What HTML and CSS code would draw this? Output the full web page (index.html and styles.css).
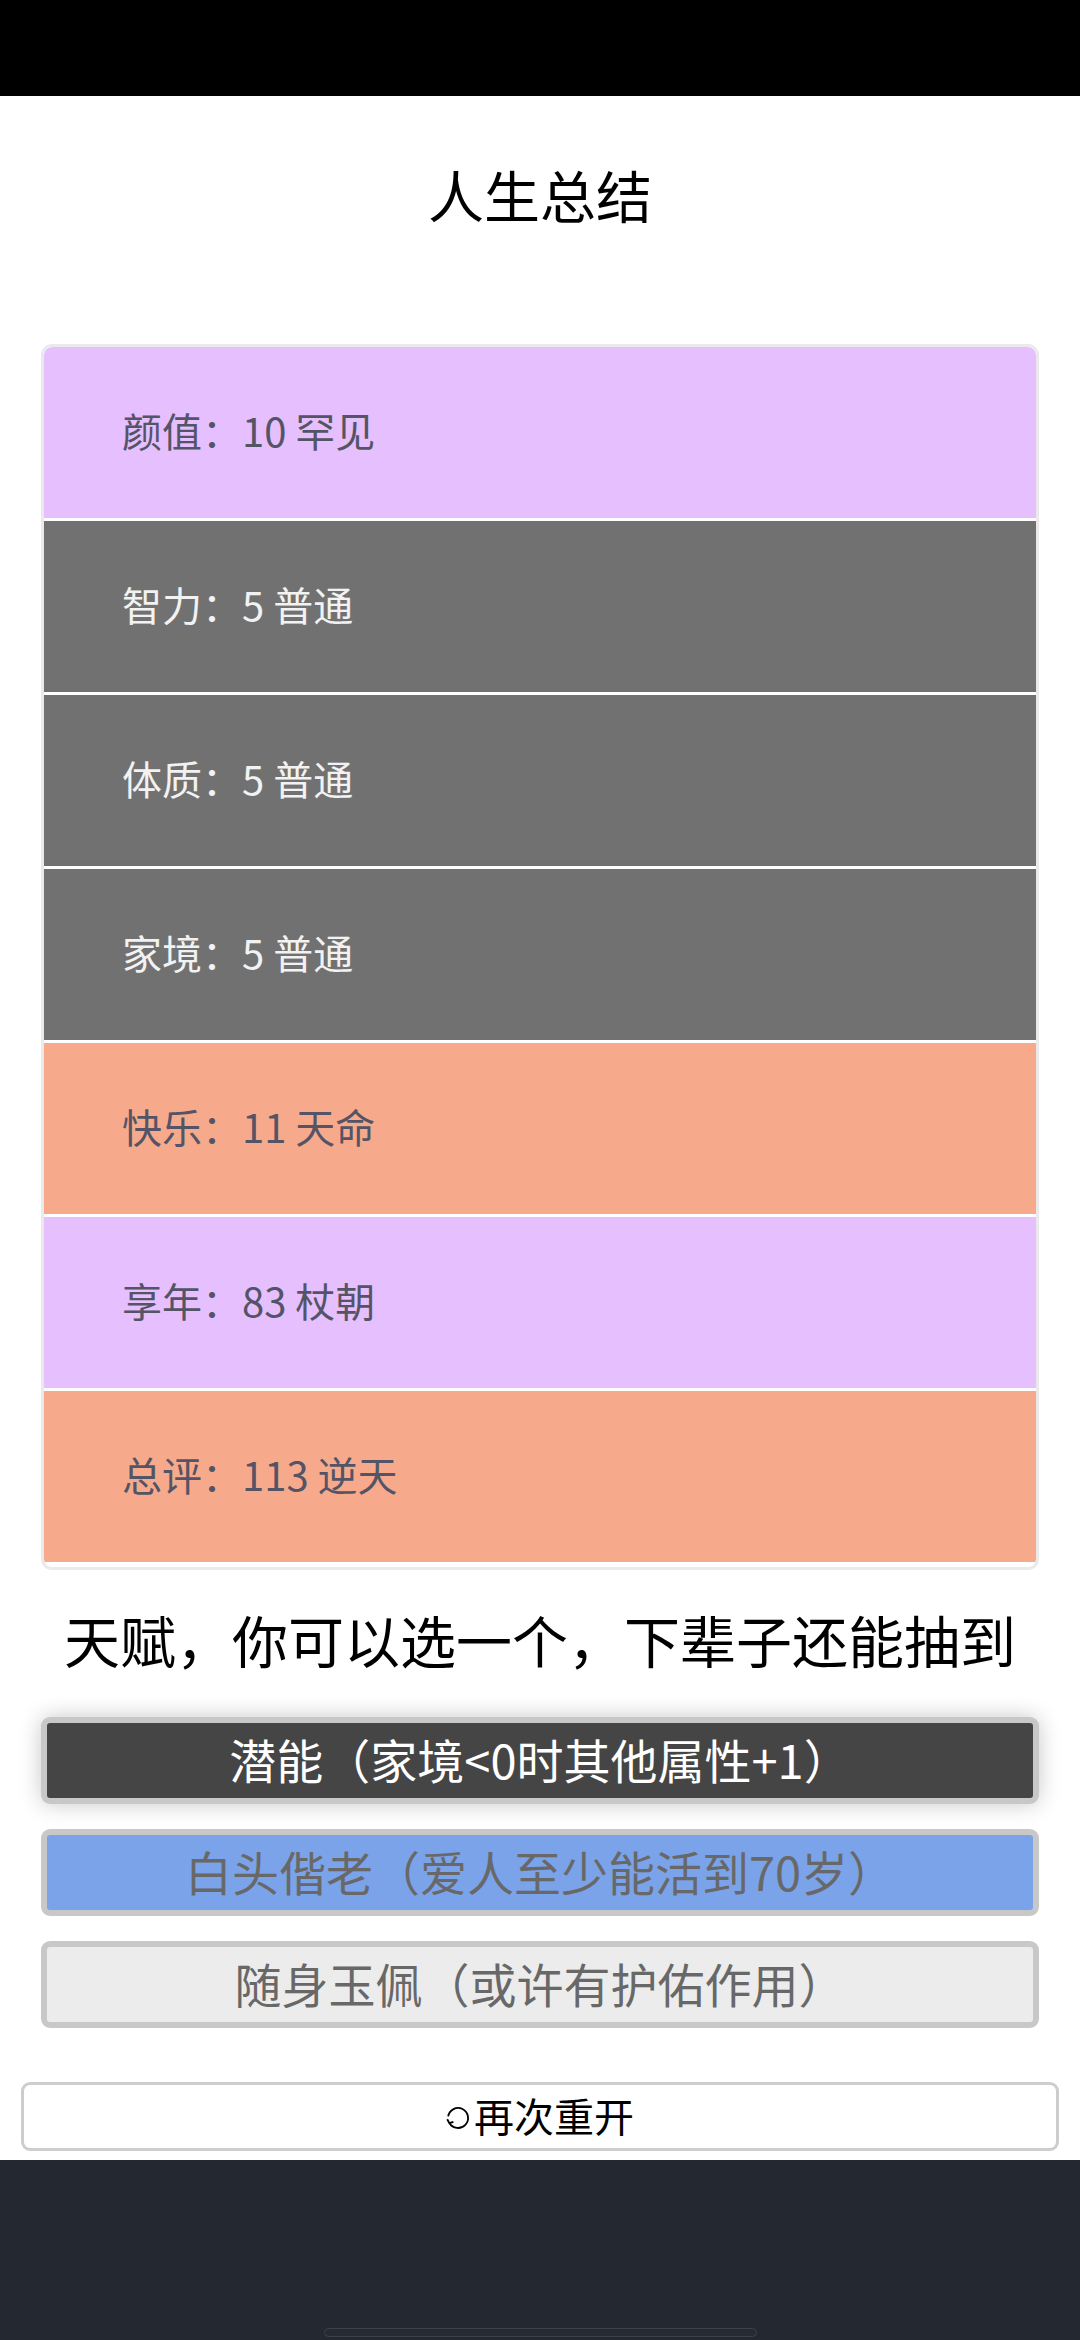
FILE: index.html
```html
<!DOCTYPE html>
<html lang="zh-CN">
<head>
    <meta charset="UTF-8">
    <meta name="viewport" content="width=device-width, initial-scale=1.0">
    <title>人生重开模拟器</title>
    <link rel="stylesheet" href="styles.css">
</head>
<body>
    <div class="statusbar"></div>

    <main class="page">
        <h1 class="title">人生总结</h1>

        <!-- Summary of properties -->
        <ul class="summary">
            <li class="grade2">颜值：10 罕见</li>
            <li class="grade0">智力：5 普通</li>
            <li class="grade0">体质：5 普通</li>
            <li class="grade0">家境：5 普通</li>
            <li class="grade3">快乐：11 天命</li>
            <li class="grade2">享年：83 杖朝</li>
            <li class="grade3">总评：113 逆天</li>
        </ul>

        <div class="subtitle">天赋，你可以选一个，下辈子还能抽到</div>

        <!-- Talents to keep -->
        <ul class="talents">
            <li class="talent selected">潜能（家境&lt;0时其他属性+1）</li>
            <li class="talent blue">白头偕老（爱人至少能活到70岁）</li>
            <li class="talent plain">随身玉佩（或许有护佑作用）</li>
        </ul>

        <button class="restart">
            <svg class="restart-icon" viewBox="0 0 24 26" width="24" height="26">
                <path d="M2.2 11.3 A10 10 0 1 1 3.4 18" fill="none" stroke="#000" stroke-width="1.8"/>
                <polyline points="1.2,14.2 3.4,18.2 7.4,16.8" fill="none" stroke="#000" stroke-width="1.8"/>
            </svg>再次重开
        </button>
    </main>

    <footer class="footer">
        <div class="home-indicator"></div>
    </footer>
</body>
</html>
```

FILE: styles.css
```css
/* Reset and base styles */
* {
    margin: 0;
    padding: 0;
    box-sizing: border-box;
}

body {
    font-family: "Noto Sans CJK SC", "Noto Sans", sans-serif;
    background-color: #fff;
    width: 1080px;
    min-height: 2340px;
    display: flex;
    flex-direction: column;
}

ul {
    list-style: none;
}

.statusbar {
    height: 96px;
    background-color: #000;
}

/* Main column */
.page {
    flex: 1;
    display: flex;
    flex-direction: column;
}

.title {
    margin-top: 57px;
    font-size: 56px;
    line-height: 82px;
    font-weight: normal;
    text-align: center;
    color: #000;
}

/* Property summary card */
.summary {
    margin: 109px 41px 0;
    border: 3px solid #ece9ed;
    border-radius: 11px;
    padding-bottom: 5px;
    overflow: hidden;
}

.summary li {
    height: 171px;
    display: flex;
    align-items: center;
    padding-left: 78px;
    padding-bottom: 5px;
    font-size: 40px;
    color: #545466;
}

.summary li + li {
    margin-top: 3px;
}

.summary li:first-child {
    border-radius: 8px 8px 0 0;
}

.grade0 {
    background-color: #717171;
    color: #f2f2f2 !important;
}

.grade2 {
    background-color: #e6bfff;
}

.grade3 {
    background-color: #f7aa8b;
}

.subtitle {
    margin-top: 28px;
    font-size: 56px;
    line-height: 82px;
    text-align: center;
    color: #000;
}

/* Talent choices */
.talents {
    margin: 37px 41px 0;
    display: flex;
    flex-direction: column;
    gap: 25px;
}

.talent {
    height: 87px;
    border: 6px solid #c8c8c8;
    border-radius: 9px;
    display: flex;
    align-items: center;
    justify-content: center;
    padding-bottom: 4px;
    font-size: 47px;
    color: #686868;
}

.talent.selected {
    background-color: #454545;
    color: #fff;
    box-shadow: 0 0 22px rgba(0, 0, 0, 0.22);
}

.talent.blue {
    background-color: #7ba3e9;
}

.talent.plain {
    background-color: #ececec;
}

/* Restart button */
.restart {
    margin: 54px 21px 0;
    height: 69px;
    border: 3px solid #cdcdcd;
    border-radius: 9px;
    background-color: #fff;
    font-family: inherit;
    font-size: 40px;
    color: #000;
    display: flex;
    align-items: center;
    justify-content: center;
    padding-bottom: 3px;
}

.restart-icon {
    margin-right: 4px;
    margin-top: 6px;
}

/* Bottom bar */
.footer {
    height: 180px;
    background-color: #232831;
    display: flex;
    justify-content: center;
    align-items: flex-end;
    padding-bottom: 3px;
}

.home-indicator {
    width: 433px;
    height: 9px;
    border: 1px solid #3c414a;
    border-radius: 5px;
    background-color: #262b33;
}
```
